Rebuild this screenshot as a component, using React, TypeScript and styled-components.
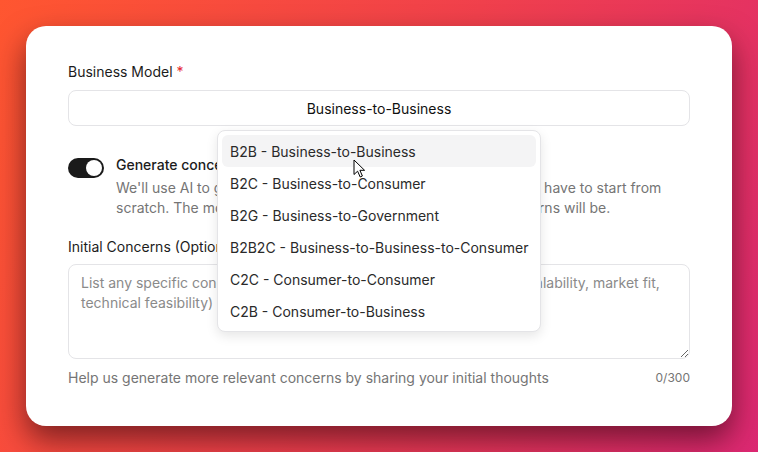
import styled, { createGlobalStyle } from "styled-components";

const GlobalStyle = createGlobalStyle`
  html, body {
    margin: 0;
    padding: 0;
  }
  body {
    font-family: Inter, "Noto Sans", sans-serif;
    -webkit-font-smoothing: antialiased;
  }
`;

const Backdrop = styled.div`
  width: 758px;
  height: 452px;
  box-sizing: border-box;
  padding: 26px;
  background: linear-gradient(115deg, #ff5630 0%, #f0404c 50%, #dc2872 100%);
  overflow: hidden;
`;

const Card = styled.div`
  width: 706px;
  height: 400px;
  box-sizing: border-box;
  padding: 36px 42px;
  background: #fff;
  border-radius: 20px;
  box-shadow: 0 14px 30px rgba(30, 0, 10, 0.55);
  display: flex;
  flex-direction: column;
`;

const Label = styled.div`
  font-size: 14px;
  line-height: 20px;
  font-weight: 400;
  color: #1c1c1c;
`;

const Required = styled.span`
  color: #e5272d;
`;

const SelectWrap = styled.div`
  position: relative;
  margin-top: 8px;
`;

const SelectBox = styled.div`
  height: 36px;
  box-sizing: border-box;
  border: 1px solid #e4e4e7;
  border-radius: 8px;
  display: flex;
  align-items: center;
  justify-content: center;
  font-size: 14px;
  color: #111;
`;

const Menu = styled.ul`
  position: absolute;
  top: 40px;
  left: 149px;
  width: 324px;
  box-sizing: border-box;
  margin: 0;
  padding: 4px;
  list-style: none;
  background: #fff;
  border: 1px solid #e4e4e7;
  border-radius: 8px;
  box-shadow: 0 4px 12px rgba(0, 0, 0, 0.1);
  z-index: 10;
`;

const MenuItem = styled.li<{ $active?: boolean }>`
  height: 32px;
  display: flex;
  align-items: center;
  padding: 0 8px;
  border-radius: 6px;
  font-size: 14px;
  color: #2a2a2a;
  white-space: nowrap;
  background: ${(p) => (p.$active ? "#f4f4f5" : "transparent")};
`;

const Pointer = styled.svg`
  position: absolute;
  left: 285px;
  top: 69px;
  z-index: 11;
`;

const ToggleRow = styled.div`
  display: flex;
  gap: 12px;
  margin-top: 29px;
`;

const Track = styled.div<{ $on: boolean }>`
  flex: 0 0 36px;
  height: 20px;
  margin-top: 3px;
  border-radius: 10px;
  background: ${(p) => (p.$on ? "#1a1a1a" : "#e4e4e7")};
  display: flex;
  align-items: center;
  justify-content: ${(p) => (p.$on ? "flex-end" : "flex-start")};
  padding: 0 2px;
  box-sizing: border-box;
`;

const Knob = styled.div`
  width: 16px;
  height: 16px;
  border-radius: 50%;
  background: #fff;
`;

const ToggleText = styled.div`
  flex: 1;
  display: flex;
  flex-direction: column;
  gap: 3px;
`;

const ToggleTitle = styled.div`
  font-size: 14px;
  line-height: 20px;
  font-weight: 500;
  color: #1c1c1c;
`;

const Muted = styled.div`
  font-size: 14px;
  line-height: 20px;
  color: #757575;
  white-space: nowrap;
`;

const SectionLabel = styled(Label)`
  margin-top: 19px;
`;

const TextArea = styled.textarea`
  margin-top: 7px;
  height: 95px;
  box-sizing: border-box;
  padding: 8px 12px;
  border: 1px solid #e4e4e7;
  border-radius: 8px;
  font-family: Inter, "Noto Sans", sans-serif;
  font-size: 14px;
  line-height: 20px;
  resize: vertical;
  outline: none;
  &::placeholder {
    color: #8a8a8a;
  }
`;

const Footer = styled.div`
  margin-top: 9px;
  display: flex;
  justify-content: space-between;
  align-items: center;
  font-size: 14px;
  line-height: 20px;
  color: #757575;
`;

const Counter = styled.span`
  font-size: 12px;
`;

const options = [
  "B2B - Business-to-Business",
  "B2C - Business-to-Consumer",
  "B2G - Business-to-Government",
  "B2B2C - Business-to-Business-to-Consumer",
  "C2C - Consumer-to-Consumer",
  "C2B - Consumer-to-Business",
];

export default function App() {
  return (
    <>
      <GlobalStyle />
      <Backdrop>
        <Card>
          <Label>
            Business Model <Required>*</Required>
          </Label>
          <SelectWrap>
            <SelectBox>Business-to-Business</SelectBox>
            <Menu>
              {options.map((o, i) => (
                <MenuItem key={o} $active={i === 0}>
                  {o}
                </MenuItem>
              ))}
            </Menu>
            <Pointer width="14" height="20" viewBox="0 0 14 20">
              <path
                d="M1 1 L1 15.5 L4.6 12.2 L7.2 18 L9.4 17 L6.9 11.3 L11.6 11.3 Z"
                fill="#fff"
                stroke="#000"
                strokeWidth="1"
                strokeLinejoin="round"
              />
            </Pointer>
          </SelectWrap>
          <ToggleRow>
            <Track $on>
              <Knob />
            </Track>
            <ToggleText>
              <ToggleTitle>Generate concerns automatically</ToggleTitle>
              <Muted>
                We'll use AI to generate potential concerns for you, so you don't have to start from
                <br />
                scratch. The more information you provide, the better the concerns will be.
              </Muted>
            </ToggleText>
          </ToggleRow>
          <SectionLabel>Initial Concerns (Optional)</SectionLabel>
          <TextArea placeholder="List any specific concerns you already have about your idea (e.g., scalability, market fit, technical feasibility)" />
          <Footer>
            <span>Help us generate more relevant concerns by sharing your initial thoughts</span>
            <Counter>0/300</Counter>
          </Footer>
        </Card>
      </Backdrop>
    </>
  );
}
